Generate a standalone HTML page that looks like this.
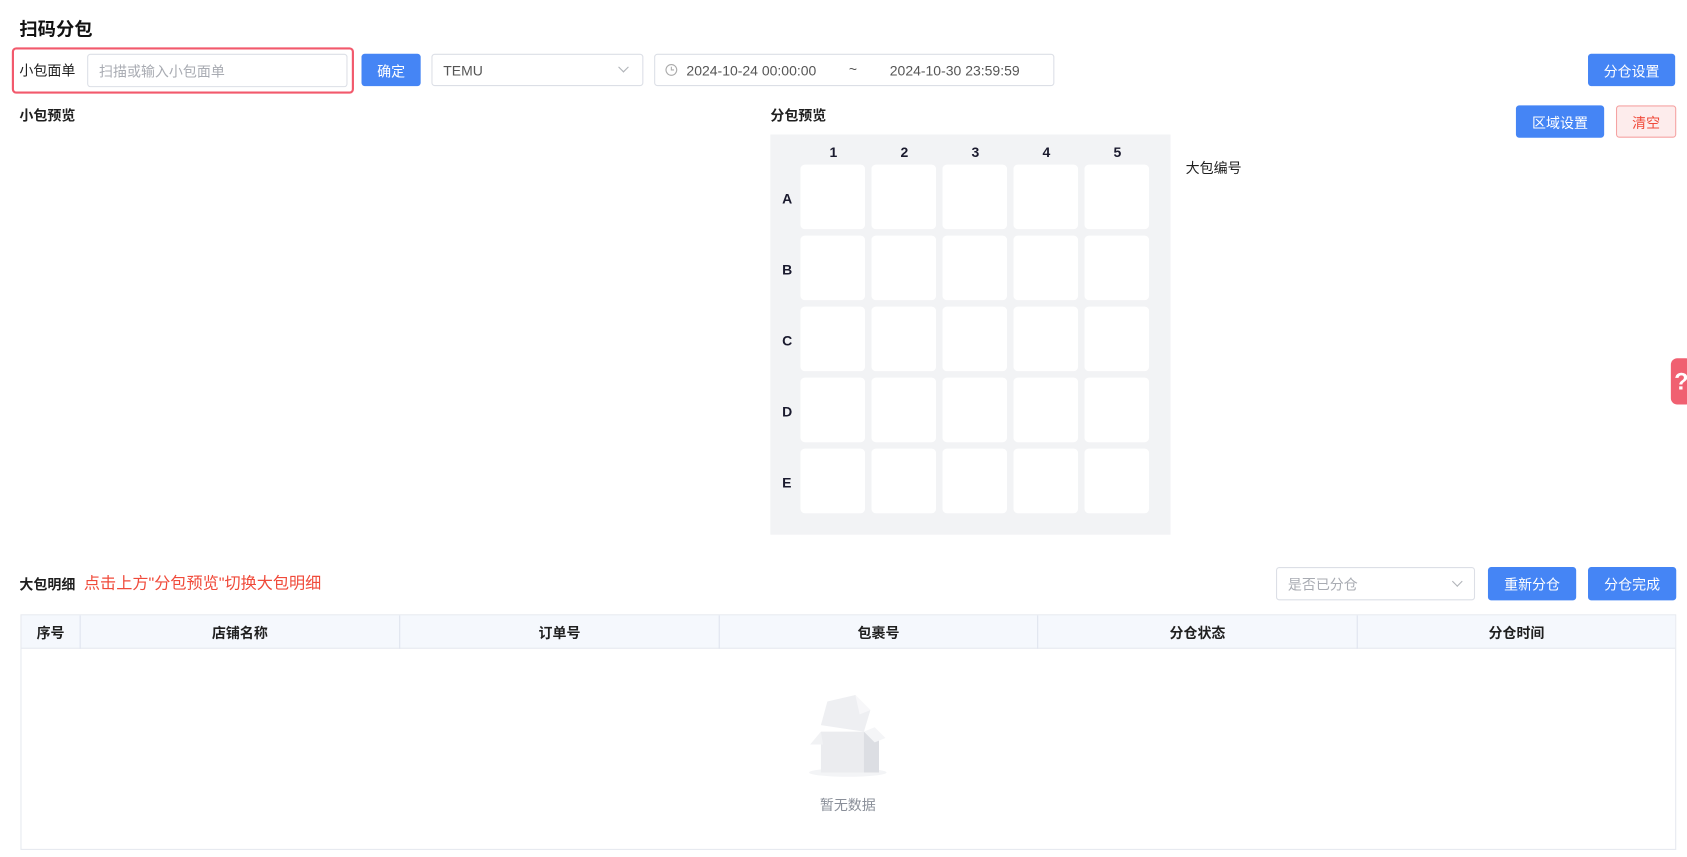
<!DOCTYPE html>
<html><head><meta charset="utf-8"><style>
*{box-sizing:border-box;margin:0;padding:0}
html,body{width:1687px;height:857px;overflow:hidden;background:#fff}
#w{position:absolute;left:0;top:0;width:1568px;height:797px;transform:scale(1.07589);transform-origin:0 0;font-family:"Liberation Sans","Noto Sans CJK SC",sans-serif;color:#1f1f1f;font-size:13px}
.a{position:absolute}
.btn{position:absolute;background:#4585f5;color:#fff;border-radius:3px;display:flex;align-items:center;justify-content:center;font-size:13px}
.inp{position:absolute;border:1px solid #dcdfe6;border-radius:3px;background:#fff;display:flex;align-items:center;color:#a8abb2}
.b{font-weight:bold}
.cell{position:absolute;width:60px;height:60px;background:#fff;border-radius:4px}
.lab{position:absolute;font-weight:bold;font-size:13px;color:#1a1a2e}
.th{position:absolute;top:0;height:31px;display:flex;align-items:center;justify-content:center;font-weight:bold;border-right:1px solid #dfe4ee}
.chev{position:absolute;width:7px;height:7px;border-right:1px solid #b0b3b8;border-bottom:1px solid #b0b3b8;transform:rotate(45deg)}
</style></head><body><div id="w">
<div class="a b" style="left:18px;top:13px;font-size:17px;color:#111">扫码分包</div>
<div class="a" style="left:11px;top:44px;width:318px;height:43px;border:2px solid #f2596c;border-radius:4px"></div>
<div class="a" style="left:18px;top:55px">小包面单</div>
<div class="inp" style="left:81px;top:50px;width:242px;height:31px;padding-left:10px">扫描或输入小包面单</div>
<div class="btn" style="left:336px;top:50px;width:55px;height:30px">确定</div>
<div class="inp" style="left:401px;top:50px;width:197px;height:30px;padding-left:10px;color:#555">TEMU</div>
<div class="chev" style="left:576px;top:59px"></div>
<div class="inp" style="left:608px;top:50px;width:372px;height:30px;color:#555">
<svg class="a" style="left:9px;top:8px" width="12" height="12" viewBox="0 0 12 12"><circle cx="6" cy="6" r="5" fill="none" stroke="#aaa"/><path d="M6 3v3h2.5" fill="none" stroke="#aaa"/></svg>
<span class="a" style="left:29px;top:7px">2024-10-24 00:00:00</span><span class="a" style="left:180px;top:6px">~</span><span class="a" style="left:218px;top:7px">2024-10-30 23:59:59</span></div>
<div class="btn" style="left:1476px;top:50px;width:81px;height:30px">分仓设置</div>
<div class="a b" style="left:18px;top:97px">小包预览</div>
<div class="a b" style="left:716px;top:97px">分包预览</div>
<div class="btn" style="left:1409px;top:98px;width:82px;height:30px">区域设置</div>
<div class="btn" style="left:1502px;top:98px;width:56px;height:30px;background:#fdecec;border:1px solid #f5a3a3;color:#f04a3a">清空</div>
<div class="a" style="left:716px;top:125px;width:372px;height:372px;background:#f2f3f5">
<div class="lab" style="left:55px;top:9px">1</div><div class="lab" style="left:121px;top:9px">2</div><div class="lab" style="left:187px;top:9px">3</div><div class="lab" style="left:253px;top:9px">4</div><div class="lab" style="left:319px;top:9px">5</div>
<div class="lab" style="left:11px;top:52px">A</div><div class="lab" style="left:11px;top:118px">B</div><div class="lab" style="left:11px;top:184px">C</div><div class="lab" style="left:11px;top:250px">D</div><div class="lab" style="left:11px;top:316px">E</div>
<div id="g"></div>
</div>
<div class="a" style="left:1102px;top:146px">大包编号</div>
<div class="a" style="left:1553px;top:333px;width:20px;height:43px;background:#f06071;border-radius:6px;color:#fff;font-weight:bold;font-size:22px;padding-left:3px;line-height:43px">?</div>
<div class="a b" style="left:18px;top:533px">大包明细</div>
<div class="a" style="left:78px;top:531px;color:#f04a3a;font-size:15px">点击上方"分包预览"切换大包明细</div>
<div class="inp" style="left:1186px;top:527px;width:185px;height:31px;padding-left:10px">是否已分仓</div>
<div class="chev" style="left:1351px;top:537px"></div>
<div class="btn" style="left:1383px;top:527px;width:82px;height:31px">重新分仓</div>
<div class="btn" style="left:1476px;top:527px;width:82px;height:31px">分仓完成</div>
<div class="a" style="left:19px;top:571px;width:1539px;height:219px;border:1px solid #e6e9ef">
<div class="a" style="left:0;top:0;width:100%;height:31px;background:#f5f8fd;border-bottom:1px solid #e6e9ef">
<div class="th" style="left:0;width:55px">序号</div>
<div class="th" style="left:55px;width:297px">店铺名称</div>
<div class="th" style="left:352px;width:297px">订单号</div>
<div class="th" style="left:649px;width:296px">包裹号</div>
<div class="th" style="left:945px;width:297px">分仓状态</div>
<div class="th" style="left:1242px;width:295px;border-right:none">分仓时间</div>
</div>
<svg class="a" style="left:727px;top:72px" width="82" height="80" viewBox="0 0 82 80">
<ellipse cx="41" cy="74" rx="36" ry="4" fill="#f3f4f6"/>
<path d="M16 30 L22 8 L48 2 L62 16 L56 36 Z" fill="#eeeff2"/>
<path d="M48 2 L62 16 L52 20 Z" fill="#f7f7f9"/>
<path d="M16 36 L70 36 L70 74 L16 74 Z" fill="#ebecef"/>
<path d="M56 36 L70 36 L70 74 L56 74 Z" fill="#dcdee3"/>
<path d="M16 36 L6 48 L18 48 Z" fill="#f1f2f4"/>
<path d="M56 36 L66 32 L76 42 L66 46 Z" fill="#f4f5f7"/>
</svg>
<div class="a" style="left:742px;top:166px;color:#8a8f99">暂无数据</div>
</div>
</div>
<script>
var g=document.getElementById('g'),h='';
for(var r=0;r<5;r++)for(var c=0;c<5;c++)h+='<div class="cell" style="left:'+(28+c*66)+'px;top:'+(28+r*66)+'px"></div>';
g.innerHTML=h;
</script>
</body></html>
